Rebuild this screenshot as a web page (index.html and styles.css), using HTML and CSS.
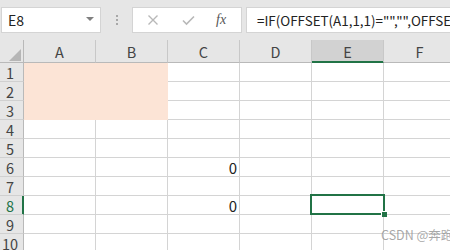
FILE: index.html
```html
<!DOCTYPE html>
<html>
<head>
<meta charset="utf-8">
<link rel="stylesheet" href="styles.css">
</head>
<body>
<div class="app">
  <div class="toolbar">
    <div class="namebox">
      <span class="name">E8</span>
      <svg class="caret" width="8" height="5" viewBox="0 0 8 5"><path d="M0 0h8L4 4z" fill="#808080"/></svg>
    </div>
    <div class="grip"><i></i><i></i><i></i></div>
    <div class="fbuttons">
      <svg class="ficon" width="12" height="12" viewBox="0 0 12 12"><path d="M1.5 1.5l9 9M10.5 1.5l-9 9" stroke="#b8b8b8" stroke-width="1.4" fill="none"/></svg>
      <svg class="ficon" width="13" height="12" viewBox="0 0 13 12"><path d="M1 6.5l3.5 3.5L12 2.5" stroke="#b8b8b8" stroke-width="1.6" fill="none"/></svg>
      <span class="fx">fx</span>
    </div>
    <div class="formula">=IF(OFFSET(A1,1,1)="","",OFFSET(A1,1,1))</div>
  </div>
  <div class="sheet">
    <div class="hd corner"><svg width="12" height="12" viewBox="0 0 12 12"><path d="M12 0V12H0z" fill="#b6b6b6"/></svg></div>
    <div class="hd col">A</div>
    <div class="hd col">B</div>
    <div class="hd col">C</div>
    <div class="hd col">D</div>
    <div class="hd col active">E</div>
    <div class="hd col">F</div>

    <div class="hd row">1</div><div class="c fill"></div><div class="c fill"></div><div class="c"></div><div class="c"></div><div class="c"></div><div class="c"></div>
    <div class="hd row">2</div><div class="c fill"></div><div class="c fill"></div><div class="c"></div><div class="c"></div><div class="c"></div><div class="c"></div>
    <div class="hd row">3</div><div class="c fill"></div><div class="c fill"></div><div class="c"></div><div class="c"></div><div class="c"></div><div class="c"></div>
    <div class="hd row">4</div><div class="c"></div><div class="c"></div><div class="c"></div><div class="c"></div><div class="c"></div><div class="c"></div>
    <div class="hd row">5</div><div class="c"></div><div class="c"></div><div class="c"></div><div class="c"></div><div class="c"></div><div class="c"></div>
    <div class="hd row">6</div><div class="c"></div><div class="c"></div><div class="c num">0</div><div class="c"></div><div class="c"></div><div class="c"></div>
    <div class="hd row">7</div><div class="c"></div><div class="c"></div><div class="c"></div><div class="c"></div><div class="c"></div><div class="c"></div>
    <div class="hd row active">8</div><div class="c"></div><div class="c"></div><div class="c num">0</div><div class="c"></div><div class="c sel"><div class="selbox"><div class="handle"></div></div></div><div class="c"></div>
    <div class="hd row">9</div><div class="c"></div><div class="c"></div><div class="c"></div><div class="c"></div><div class="c"></div><div class="c"></div>
    <div class="hd row">10</div><div class="c"></div><div class="c"></div><div class="c"></div><div class="c"></div><div class="c"></div><div class="c"></div>
  </div>
  <div class="watermark">CSDN @奔跑的小白</div>
</div>
</body>
</html>
```

FILE: styles.css
```css
html, body {
  margin: 0;
  padding: 0;
  width: 450px;
  height: 250px;
  overflow: hidden;
  background: #ffffff;
}
.app {
  position: relative;
  width: 450px;
  height: 250px;
  overflow: hidden;
  font-family: "Noto Sans CJK SC", "Noto Sans", sans-serif;
}
.toolbar {
  height: 40px;
  background: #e6e6e6;
  display: flex;
  align-items: flex-start;
  padding-top: 7px;
  box-sizing: border-box;
}
.namebox {
  margin-left: 1px;
  width: 100px;
  height: 26px;
  box-sizing: border-box;
  background: #fff;
  border: 1px solid #d4d4d4;
  display: flex;
  align-items: center;
  padding: 0 6px 0 6px;
}
.name {
  flex: 1;
  font-size: 14px;
  color: #222;
  line-height: 1;
}
.caret {
  margin-bottom: 2px;
}
.grip {
  width: 31px;
  height: 26px;
  display: flex;
  flex-direction: column;
  align-items: center;
  justify-content: center;
  gap: 2px;
}
.grip i {
  width: 2px;
  height: 2px;
  background: #a8a8a8;
  display: block;
}
.fbuttons {
  width: 110px;
  height: 26px;
  box-sizing: border-box;
  background: #fff;
  border: 1px solid #d4d4d4;
  display: flex;
  align-items: center;
  padding-left: 14px;
  gap: 23px;
}
.fx {
  font-family: "Liberation Serif", serif;
  font-style: italic;
  font-size: 14px;
  color: #555;
  margin-left: -2px;
}
.formula {
  margin-left: 4px;
  flex: 1;
  height: 26px;
  box-sizing: border-box;
  background: #fff;
  border: 1px solid #d4d4d4;
  border-right: none;
  padding-left: 10px;
  font-size: 13.4px;
  line-height: 24px;
  color: #222;
  white-space: nowrap;
  overflow: hidden;
}
.sheet {
  display: grid;
  grid-template-columns: 24px repeat(6, 72px);
  grid-template-rows: 23px repeat(10, 19px);
  width: 456px;
}
.hd {
  background: #e6e6e6;
  color: #444;
  font-size: 14.5px;
  line-height: 15px;
  box-sizing: border-box;
  display: flex;
  justify-content: center;
  align-items: flex-end;
}
.col {
  border-right: 1px solid #c8c8c8;
  border-bottom: 1px solid #b9b9b9;
  padding-bottom: 3px;
}
.corner {
  border-right: 1px solid #b9b9b9;
  border-bottom: 1px solid #b9b9b9;
  justify-content: flex-end;
  padding: 0 2px 1px 0;
}
.corner svg { display: block; }
.row {
  border-right: 1px solid #b9b9b9;
  border-bottom: 1px solid #d0d0d0;
  padding-right: 3px;
  padding-bottom: 1px;
}
.col.active {
  background: #d2d2d2;
  border-bottom-color: #217346;
  box-shadow: inset 0 -1px 0 #217346;
}
.row.active {
  color: #217346;
  border-right-color: #217346;
  box-shadow: inset -1px 0 0 #217346;
}
.c {
  box-sizing: border-box;
  border-right: 1px solid #d4d4d4;
  border-bottom: 1px solid #d4d4d4;
  background: #fff;
  position: relative;
}
.c.fill {
  background: #fce4d6;
  border-color: #fce4d6;
}
.num {
  font-size: 15px;
  line-height: 15px;
  color: #222;
  display: flex;
  justify-content: flex-end;
  align-items: flex-end;
  padding-right: 2px;
  padding-bottom: 1px;
}
.selbox {
  position: absolute;
  left: -2px;
  top: -2px;
  right: -2px;
  bottom: -1px;
  border: 2px solid #217346;
  z-index: 2;
}
.handle {
  position: absolute;
  right: -4px;
  bottom: -4px;
  width: 5px;
  height: 5px;
  background: #217346;
  border: 1px solid #fff;
  border-right: none;
  border-bottom: none;
}
.watermark {
  position: absolute;
  left: 381px;
  top: 228px;
  font-size: 12.5px;
  line-height: 14px;
  color: rgba(140, 140, 140, 0.75);
  white-space: nowrap;
}
```
